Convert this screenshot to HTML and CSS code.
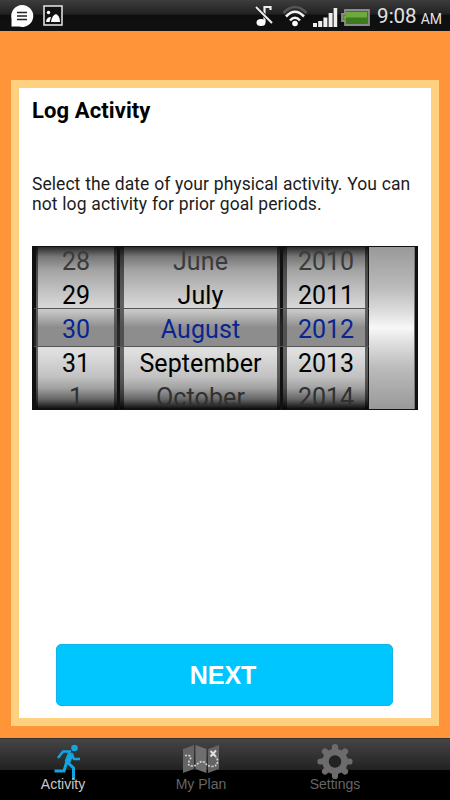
FILE: index.html
```
<!DOCTYPE html>
<html lang="en">
<head>
  <meta charset="UTF-8" />
  <meta name="viewport" content="width=device-width, initial-scale=1.0" />
  <title>Log Activity</title>
  <link rel="stylesheet" href="styles.css">
</head>
<body>
  <header class="status">
    <svg class="icon-chat" width="24" height="24" viewBox="0 0 24 24">
      <path d="M12 1a11 11 0 1 1-3 21.500H1.500V14.500A11 11 0 0 1 12 1z" fill="#fff"/>
      <path d="M7 8.500h10M7 12h10M7 15.500h10" stroke="#222" stroke-width="1.400"/>
    </svg>
    <svg class="icon-photo" width="20" height="21" viewBox="0 0 20 21">
      <rect x="1" y="1" width="18" height="19" fill="#111" stroke="#ddd" stroke-width="1.600"/>
      <circle cx="5.500" cy="7.500" r="1.700" fill="#fff"/>
      <path d="M3 17q.5-5 5-5l-1.500 5zM8 17q1-7 5-8 4 2 4 8z" fill="#fff"/>
    </svg>
    <div class="spacer"></div>
    <svg class="icon-mute" width="19" height="22" viewBox="0 0 19 22">
      <path d="M9.500 17V2h6v3" stroke="#eee" stroke-width="2.200" fill="none"/>
      <ellipse cx="6" cy="17.500" rx="4.500" ry="3.600" fill="#fff"/>
      <path d="M1 2l16 16" stroke="#1a1a1a" stroke-width="3.600"/>
      <path d="M1 2l16 16" stroke="#eee" stroke-width="2"/>
    </svg>
    <svg class="icon-wifi" width="26" height="22" viewBox="0 0 26 22" fill="none">
      <path d="M1.500 8Q13-4 24.500 8" stroke="#555" stroke-width="2.600"/>
      <path d="M4 11.500Q13 2 22 11.500M8 15.500Q13 10 18 15.500" stroke="#f2f2f2" stroke-width="2.600"/>
      <circle cx="13" cy="18.500" r="2.800" fill="#fff"/>
    </svg>
    <svg class="icon-signal" width="25" height="20" viewBox="0 0 25 20" fill="#eee">
      <path d="M0 15h4v4H0zM5.200 13h4v6h-4zM10.400 9.500h4V19h-4zM15.600 5h4v14h-4zM20.600 0h3.600v19h-3.600z"/>
    </svg>
    <svg class="icon-battery" width="29" height="17" viewBox="0 0 29 17">
      <path d="M4 1h24v15H4v-4H1V5h3z" fill="#3c7c1c" stroke="#8b8b8b" stroke-width="1.800"/>
      <path d="M5 3h21v5.500H5z" fill="#6fa83e"/>
      <path d="M2.500 6.500H5v4H2.500z" fill="#6fa83e"/>
    </svg>
    <span class="clock">9:08</span><span class="ampm">AM</span>
  </header>

  <main class="card">
    <h1>Log Activity</h1>
    <p>Select the date of your physical activity. You can<br>not log activity for prior goal periods.</p>

    <div class="picker">
      <div class="wheel day">
        <span>28</span><span>29</span><span class="on">30</span><span>31</span><span>1</span>
      </div>
      <div class="divider"></div>
      <div class="wheel month">
        <span>June</span><span>July</span><span class="on">August</span><span>September</span><span>October</span>
      </div>
      <div class="divider"></div>
      <div class="wheel year">
        <span>2010</span><span>2011</span><span class="on">2012</span><span>2013</span><span>2014</span>
      </div>
      <div class="blank"></div>
      <div class="band"></div>
    </div>

    <button class="next">NEXT</button>
  </main>

  <nav class="tabs">
    <a class="tab active">
      <svg width="30" height="37" viewBox="0 0 30 37" fill="none" stroke="#12a5e0">
        <circle cx="21.500" cy="5" r="3.300" fill="#12a5e0" stroke="none"/>
        <path d="M18 10l-3.500 9" stroke-width="6"/>
        <path d="M18 8.500h-8l-5 6.500" stroke-width="2.500"/>
        <path d="M18 10l3 6h6" stroke-width="2.600"/>
        <path d="M14 18l-3 10H1.500M14 19l6.500 6v12" stroke-width="3"/>
      </svg>
      <span>Activity</span>
    </a>
    <a class="tab plan">
      <svg width="38" height="37" viewBox="0 0 38 37">
        <path d="M1 6l11-4v24L1 30zM26 6l11-4v24l-11 4z" fill="#646464"/>
        <path d="M13.500 2L24.500 6v24l-11-4z" fill="#6f6f6f"/>
        <path d="M3 12.500h4q3 1.500.5 5-3 5 2.500 5.500 4 0 6-2.500 3-3 7-1 2 3.500 6 4 7 0 6.500-6-.5-4-5-6" fill="none" stroke="#d0d0d0" stroke-width="1.700" stroke-dasharray="2 1.300"/>
        <path d="M28.500 8l5 5M34 7.500l-5.500 6" stroke="#e2e2e2" stroke-width="1.900"/>
      </svg>
      <span>My Plan</span>
    </a>
    <a class="tab">
      <svg width="36" height="37" viewBox="-18 -18.500 36 37">
        <g stroke="#6c6c6c" stroke-width="6.200" stroke-linecap="round">
          <path d="M0-14.500v29M-14.500 0h29" />
          <path d="M-10-10l20 20M10-10l-20 20" />
        </g>
        <circle r="12.700" fill="#6c6c6c"/>
        <circle r="6.200" fill="#222"/>
      </svg>
      <span>Settings</span>
    </a>
  </nav>
</body>
</html>
```
FILE: styles.css
```
* {
  box-sizing: border-box;
}
body {
  margin: 0;
  height: 800px;
  display: flex;
  flex-direction: column;
  background-color: #ff9538;
  font-family: Roboto, sans-serif;
  color: #000;
  overflow: hidden;
}
.status {
  height: 31px;
  display: flex;
  align-items: center;
  padding: 0 8px 0 10px;
  background: linear-gradient(#3d3d3d, #222 45%, #0e0e0e 50%, #111);
  color: #e2e2e2;
}
.icon-photo {
  margin-left: 9px;
}
.spacer {
  flex: 1;
}
.icon-wifi {
  margin-left: 8px;
}
.icon-signal {
  margin: 4px 0 0 5px;
}
.icon-battery {
  margin: 3px 7px 0 3px;
}
.clock {
  font-size: 20.5px;
  line-height: 31px;
  padding-top: 2px;
}
.ampm {
  font-size: 14px;
  margin: 6px 0 0 4px;
}
.card {
  width: 428px;
  height: 646px;
  margin: 49px 0 0 11px;
  padding: 9px 13px;
  background-color: #fff;
  border: 8px solid #ffd07f;
  display: flex;
  flex-direction: column;
}
h1 {
  margin: 0;
  font-size: 22px;
  line-height: 28px;
  font-weight: 700;
  letter-spacing: 0.1px;
}
p {
  margin: 49px 0 0;
  font-size: 17.5px;
  line-height: 20px;
  letter-spacing: 0.05px;
  word-spacing: 0.4px;
  color: #1c1c1c;
  white-space: nowrap;
}
.picker {
  position: relative;
  display: flex;
  width: 386px;
  height: 164px;
  margin-top: 32px;
  padding: 1px 3px 1px 4px;
  background-color: #111;
}
.wheel {
  display: flex;
  flex-direction: column;
  text-align: center;
  border: solid rgba(0,0,0,.55);
  border-width: 0 3px 0 4px;
  background: linear-gradient(#2a2a2a, #777 6%, #a2a2a2 14%, #c2c2c2 27%, #dedede 40%, #dedede 65%, #c2c2c2 80%, #a2a2a2 87%, #666 94%, #0c0c0c) border-box;
}
.wheel span {
  position: relative;
  z-index: 1;
  flex: none;
  height: 34px;
  font-size: 25px;
  line-height: 34px;
}
.wheel span:first-child {
  margin-top: -2px;
  color: #3a3a3a;
}
.wheel span:last-child {
  height: 28px;
  color: #303030;
}
.wheel .on {
  color: #0a2590;
}
.day {
  width: 81px;
  border-left-width: 2px;
}
.month {
  width: 160px;
}
.month span {
  letter-spacing: 0.1px;
}
.year {
  width: 85px;
}
.divider {
  width: 3px;
}
.blank {
  width: 46px;
  margin-left: 1px;
  border-right: 1px solid #777;
  background: linear-gradient(#999, #bbb 25%, #ddd 40%, #f8f8f8 50%, #ddd 60%, #bbb 75%, #999);
}
/* selected row */
.band {
  position: absolute;
  left: 2px;
  top: 62px;
  width: 335px;
  height: 39px;
  border: solid #555;
  border-width: 1px 0;
  background: linear-gradient(rgba(60,60,60,.1), rgba(60,60,60,.5) 50%, rgba(60,60,60,.5));
}
.next {
  width: 337px;
  height: 62px;
  margin: 234px 0 0 24px;
  padding: 0 3px 0 0;
  border: 1px solid #12b5e8;
  border-radius: 5px;
  background-color: #00c6ff;
  color: #fff;
  font: bold 25px "Liberation Sans", sans-serif;
}
.tabs {
  height: 62px;
  margin-top: 12px;
  display: flex;
  background: linear-gradient(#454545, #222 50%, #000 51%);
  border-top: 1px solid #333;
}
.tab {
  width: 136px;
  display: flex;
  flex-direction: column;
  align-items: center;
  padding-top: 4px;
  font: 14px/16px "Liberation Sans", sans-serif;
  color: #656565;
}
.tab:first-child {
  margin-left: -5px;
}
.tab span {
  margin-top: -4px;
  z-index: 1;
}
.tab.active {
  color: #c8c8c8;
}
.tab.active svg {
  margin-left: 9px;
}
.plan {
  padding-left: 4px;
}
```
